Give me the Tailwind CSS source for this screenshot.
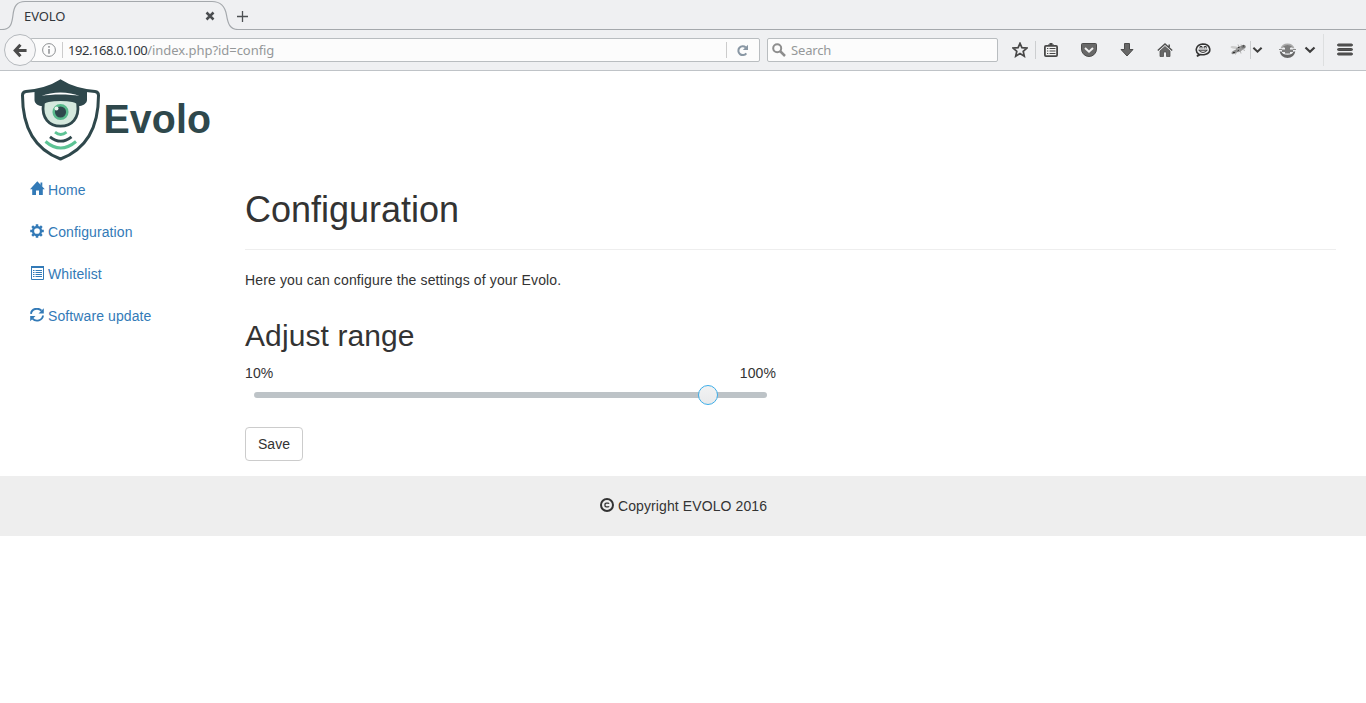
<!DOCTYPE html>
<html lang="en">
<head>
<meta charset="utf-8">
<title>EVOLO</title>
<script src="https://cdn.jsdelivr.net/npm/@tailwindcss/browser@4"></script>
</head>
<body class="bg-white text-[#333] text-sm leading-5 tracking-[0.1px] font-['Liberation_Sans',Arial,sans-serif] h-[703px] overflow-hidden">

<!-- Browser chrome -->
<div class="h-[71px] bg-[#eff0f2] border-b border-[#bfc3c7] font-['Noto_Sans',sans-serif] tracking-normal text-[13px] flex flex-col">
  <div class="relative h-[30px] shrink-0 flex">
    <svg class="absolute inset-0" width="1366" height="30" fill="none">
      <path d="M0 29.5H2C11 29.5 12 23 13 15C14 6 17 1.5 25 1.5H212C221 1.5 225 6 226.500 15C228 24 230 29.500 238 29.500H1366" stroke="#a4a8ac" stroke-width="1.2" />
    </svg>
    <div class="flex items-center w-[228px] pl-6 pt-[2px] pr-[13px] justify-between text-[13px] text-[#31363b]">
      <span class="tracking-[-0.1px]">EVOLO</span>
      <svg width="10" height="10" viewBox="0 0 10 10" stroke="#4a4d50" stroke-width="2.5"><path d="M1.500 1.500L8.500 8.500M8.500 1.500L1.500 8.500"/></svg>
    </div>
    <svg class="ml-2 mt-[10px]" width="13" height="13" viewBox="0 0 13 13" stroke="#4d5053" stroke-width="1.300"><path d="M6.500 1V12M1 6.500H12"/></svg>
  </div>
  <div class="relative h-10 flex items-center">
    <div class="ml-[30px] w-[730px] h-6 bg-[#fcfcfc] border border-[#b9bdc0] rounded-[2px] flex items-center">
      <svg class="ml-[11px]" width="14" height="14" viewBox="0 0 14 14" fill="none" stroke="#8c8f91"><circle cx="7" cy="7" r="6.400"/><path d="M7 6V10.700M7 3V4.700" stroke-width="1.500"/></svg>
      <div class="ml-[6px] w-px h-4 bg-[#ccc]"></div>
      <div class="ml-[5px] text-[#959899] whitespace-pre tracking-[-0.05px]"><span class="text-[#31363b] tracking-[-0.43px]">192.168.0.100</span>/index.php?id=config</div>
      <div class="ml-auto w-px h-4 bg-[#ccc]"></div>
      <svg class="ml-[9px] mr-[10px]" width="13" height="13" viewBox="0 0 13 13"><path d="M9.800 3.500A4.400 4.400 0 1 0 10.300 9.300" fill="none" stroke="#8997a4" stroke-width="2"/><path d="M12 .8V6H6.800Z" fill="#8997a4"/></svg>
    </div>
    <div class="absolute left-1 top-1 w-8 h-8 rounded-full bg-[#f6f6f7] border border-[#b5b9bd] flex items-center justify-center">
      <svg width="14" height="15" viewBox="0 0 16 16" fill="none" stroke="#4b4b4b" stroke-width="3.500"><path d="M8.500 1.500L2.500 8L8.500 14.500M3 8H15.500"/></svg>
    </div>
    <div class="ml-[7px] w-[231px] h-6 bg-[#fcfcfc] border border-[#b9bdc0] rounded-[2px] flex items-center">
      <svg class="ml-1" width="14" height="14" viewBox="0 0 14 14" fill="none" stroke="#8e8e8e" stroke-width="2"><circle cx="5.200" cy="5.200" r="4"/><path d="M8 8L13 13" stroke-width="2.500"/></svg>
      <span class="ml-[5px] text-[#959899] tracking-[-0.15px]">Search</span>
    </div>
    <svg class="ml-[14px]" width="16" height="16" viewBox="0 0 16 16" fill="none" stroke="#484848" stroke-width="1.700"><path d="M8 1.300L9.900 5.600L14.900 6.100L11.200 9.300L12.300 14.200L8 11.600L3.700 14.200L4.800 9.300L1.100 6.100L6.100 5.600Z"/></svg>
    <div class="ml-[7px] w-px h-[18px] bg-[#ccced0]"></div>
    <svg class="ml-2" width="14" height="16" viewBox="0 0 14 16" fill="none" stroke="#484848"><rect x=".9" y="3.900" width="12.200" height="10.200" rx="1" stroke-width="1.800" fill="#f4f4f4"/><path d="M4 4H10V2.500H8.500V1H5.500V2.500H4Z" fill="#484848" stroke="none"/><path d="M3 6.500H4.300M3 9H4.300M3 11.500H4.300M5.500 6.500H11.500M5.500 9H11.500M5.500 11.500H11.500"/></svg>
    <svg class="ml-[23px]" width="16" height="16" viewBox="0 0 16 16"><path d="M1.500 1.500H14.500Q15.500 1.500 15.500 2.500V7A7.500 7.500 0 0 1 .5 7V2.500Q.5 1.500 1.500 1.500Z" fill="#686868" stroke="#4c4c4c"/><path d="M4 6L8 9.700L12 6" fill="none" stroke="#f2f2f2" stroke-width="2"/></svg>
    <svg class="ml-[23px]" width="14" height="16" viewBox="0 0 14 16"><path d="M4.500 1.500H9.500V7.500H13L7 14L1 7.500H4.500Z" fill="#686868" stroke="#4c4c4c"/></svg>
    <svg class="ml-[23px]" width="16" height="16" viewBox="0 0 16 16"><path d="M8 4.500L13 9V14.500H9.500V10H6.500V14.500H3V9Z" fill="#686868" stroke="#505050" stroke-width=".8"/><path d="M.8 8.500L8 2L15.200 8.500M12.200 2.500V5" fill="none" stroke="#505050" stroke-width="1.500"/></svg>
    <svg class="ml-[22px]" width="16" height="16" viewBox="0 0 16 16" fill="none" stroke="#333" stroke-width="1.600"><path d="M3.800 12.200C-.4 9.500.6 2.800 7.700 2C15.800 2 17 10.500 10.800 12.200C8.500 12.900 6.500 12.800 5.300 12.600L2 14.200Z"/><path d="M3.700 8.200H12.300Q8 12.700 3.700 8.200Z" fill="#eee" stroke-width="1"/><path d="M5 6.500V4.500H7V6.500M9.200 6.500V4.500H11.200V6.500" stroke-width="1"/></svg>
    <svg class="ml-[19px]" width="18" height="16" viewBox="0 0 18 16"><g fill="#777"><ellipse cx="4.500" cy="5.500" rx="4" ry="1.300" transform="rotate(8 4.500 5.500)" fill="#ccc"/><ellipse cx="9.500" cy="7" rx="4" ry="2.600" transform="rotate(-28 9.500 7)" fill="#999"/><ellipse cx="13.500" cy="4.800" rx="2.200" ry="2" fill="#777"/><ellipse cx="4.500" cy="10" rx="3.300" ry="1.600" transform="rotate(-25 4.500 10)" fill="#888"/></g><path d="M7 8L5.500 12.500M10 8L11 11.500M12 7L15 8.500M9 5L8 2.500M12 4L11 2.500" stroke="#999" stroke-width=".7" fill="none"/><path d="M3 10.500H5M7.500 9L9 8M8 5.500H9.500M13 4H14" stroke="#333"/></svg>
    <div class="ml-[2px] w-px h-[18px] bg-[#ccced0]"></div>
    <svg class="ml-px" width="11" height="8" viewBox="0 0 12 8" fill="none" stroke="#3d3d3d" stroke-width="2.200"><path d="M1.500 1.500L6 5.800L10.500 1.500"/></svg>
    <svg class="ml-[16px]" width="17" height="17" viewBox="0 0 17 17"><path d="M1.500 6.500A7.300 7 0 0 1 15.500 6.500L13 6Q8.500 1 4 6Z" fill="#aaa"/><path d="M4 4.500Q8.500 1.500 13 4.500L11 6V7.500H14V10H11V11.500H6V10H3V7.500H6V6Z" fill="#7c7c7c"/><path d="M.7 9.500H2.500Q3.500 12.700 8.500 12.700Q13.500 12.700 14.500 9.500H16.300Q15 16 8.500 16Q2 16 .7 9.500Z" fill="#666"/><path d="M0 7.500H3M14 7.500H17" stroke="#888"/></svg>
    <svg class="ml-2" width="12" height="8" viewBox="0 0 12 8" fill="none" stroke="#3d3d3d" stroke-width="2.200"><path d="M1.500 1.500L6 5.800L10.500 1.500"/></svg>
    <div class="ml-[7px] w-px h-8 bg-[#dddfe0]"></div>
    <svg class="ml-[13px]" width="16" height="14" viewBox="0 0 16 14" fill="#555" stroke="#484848"><rect x=".5" y="1" width="15" height="2" rx="1"/><rect x=".5" y="5.500" width="15" height="2" rx="1"/><rect x=".5" y="10" width="15" height="2" rx="1"/></svg>
  </div>
</div>

<!-- Brand -->
<header class="h-[98px] pl-5 pt-[7px]">
  <svg width="194" height="84" viewBox="20 78 194 84" fill="none">
    <path d="M60.500 81C69 86.500 83 90.500 95 91.500Q98.600 92 98.500 95.500C98.500 126 87 149 60.500 159C34 149 22.500 126 22.500 95.500Q22.400 92 26 91.500C38 90.500 52 86.500 60.500 81Z" stroke="#2f484c" stroke-width="3"/>
    <path d="M60.500 80C68 85 77 88 87 90V100C87 103 83.500 105.500 80 106H41C37.500 105.500 34.500 103 34.500 100V90C44 88 53 85 60.500 80Z" fill="#2f484c"/>
    <path d="M43.300 104C42.500 98 78.500 98 77.700 104C79.500 118 72 126.200 60.500 126.200C49 126.200 41.500 118 43.300 104Z" fill="#d5e9de" stroke="#2f484c" stroke-width="2.800"/>
    <path d="M41.500 96C52 91.300 69 91.300 79.500 96C70 94 51 94 41.500 96Z" fill="#fff"/>
    <circle cx="60.500" cy="112" r="6.800" fill="#2f484c" stroke="#58b98b" stroke-width="2.500"/>
    <circle cx="56.500" cy="108.500" r="2" fill="#e8f4ee"/>
    <path d="M55 132.200Q60.700 136.800 66.500 132.200" stroke="#5dc495" stroke-width="2.800"/>
    <path d="M50 136.800Q60.700 145.500 71.500 136.800" stroke="#2f484c" stroke-width="2.800"/>
    <path d="M45.500 141.500Q60.700 154.500 76 141.500" stroke="#5dc495" stroke-width="3"/>
    <text x="103.500" y="132.500" textLength="107.500" lengthAdjust="spacingAndGlyphs" class="[font-family:'Liberation_Sans',Arial,sans-serif] font-bold text-[40px]" fill="#2f484c">Evolo</text>
  </svg>
</header>

<div class="flex h-[307px]">
  <nav class="w-[230px] pl-[30px] pt-[11px] flex flex-col gap-[22px] text-[#337ab7]">
    <a class="flex gap-1 h-5"><svg class="mt-px overflow-visible" width="14" height="14" viewBox="0 0 14 14" fill="currentColor"><path d="M7.300 .3L14.800 8.200H12.800V14H9V9.500H6V14H2.200V8.200H0L7.300 .3ZM10.500 1.500H12.300V5.500L10.500 3.500Z"/></svg>Home</a>
    <a class="flex gap-1 h-5"><svg class="mt-[2px]" width="14" height="14" viewBox="0 0 14 14" fill="none" stroke="currentColor"><circle cx="7" cy="7" r="4" stroke-width="2.300"/><path d="M7 .2V2.500M7 11.500V13.800M.2 7H2.500M11.500 7H13.800M2.200 2.200L3.800 3.800M10.200 10.200L11.800 11.800M11.800 2.200L10.200 3.800M3.800 10.200L2.200 11.800" stroke-width="2.500"/></svg>Configuration</a>
    <a class="flex gap-1 h-5"><svg class="mt-[2px]" width="14" height="14" viewBox="0 0 14 14" fill="none" stroke="currentColor"><path d="M1.500 .5H13.500V13.500H1.500Z"/><path d="M1 1H14" stroke-width="2"/><path d="M3 4.500H4.500M3 6.500H4.500M3 8.500H4.500M3 10.500H4.500M5.500 4.500H12M5.500 6.500H12M5.500 8.500H12M5.500 10.500H12"/></svg>Whitelist</a>
    <a class="flex gap-1 h-5"><svg class="mt-[2px]" width="14" height="14" viewBox="0 0 14 14"><path d="M1 5.800C1.500 .8 8 -.9 11.500 2.700M13 7.500C12.500 12.400 6 14.400 2.500 10.700" fill="none" stroke="currentColor" stroke-width="1.900"/><path d="M13.800 .2V5.500H8.500ZM.2 13.300V8H5.500Z" fill="currentColor"/></svg>Software update</a>
  </nav>
  <main class="w-[1136px] pl-[15px] pr-[30px] pt-[21px]">
    <h1 class="text-[36px] leading-[40px] tracking-normal pb-[19px] border-b border-[#eee]">Configuration</h1>
    <p class="mt-5 tracking-[0.13px]">Here you can configure the settings of your Evolo.</p>
    <h2 class="text-[30px] leading-[33px] mt-[29px]">Adjust range</h2>
    <div class="w-[531px] mt-[11px] flex justify-between"><span>10%</span><span>100%</span></div>
    <div class="relative w-[513px] h-[6px] ml-[9px] mt-[9px] rounded-full bg-[#bdc3c7]">
      <div class="absolute left-[444px] -top-[7px] w-5 h-5 rounded-full border border-[#3daee9] bg-linear-to-b from-[#f2f3f3] to-[#e9eaeb]"></div>
    </div>
    <button class="mt-[29px] h-[34px] w-[58px] border border-[#ccc] rounded-[4px] bg-white tracking-normal">Save</button>
  </main>
</div>

<footer class="h-[60px] bg-[#eee] flex items-center justify-center gap-1 pl-px">
  <svg class="-mt-[2px]" width="14" height="14" viewBox="0 0 14 14" fill="none" stroke="currentColor"><circle cx="7" cy="7" r="6" stroke-width="2"/><path d="M9 5.800Q8.700 5.200 8 5.200H6.200Q5 5.200 5 6.200V7.800Q5 8.800 6.200 8.800H8Q8.700 8.800 9 8.200" stroke-width="1.300"/></svg>
  <span>Copyright EVOLO 2016</span>
</footer>
</body>
</html>
